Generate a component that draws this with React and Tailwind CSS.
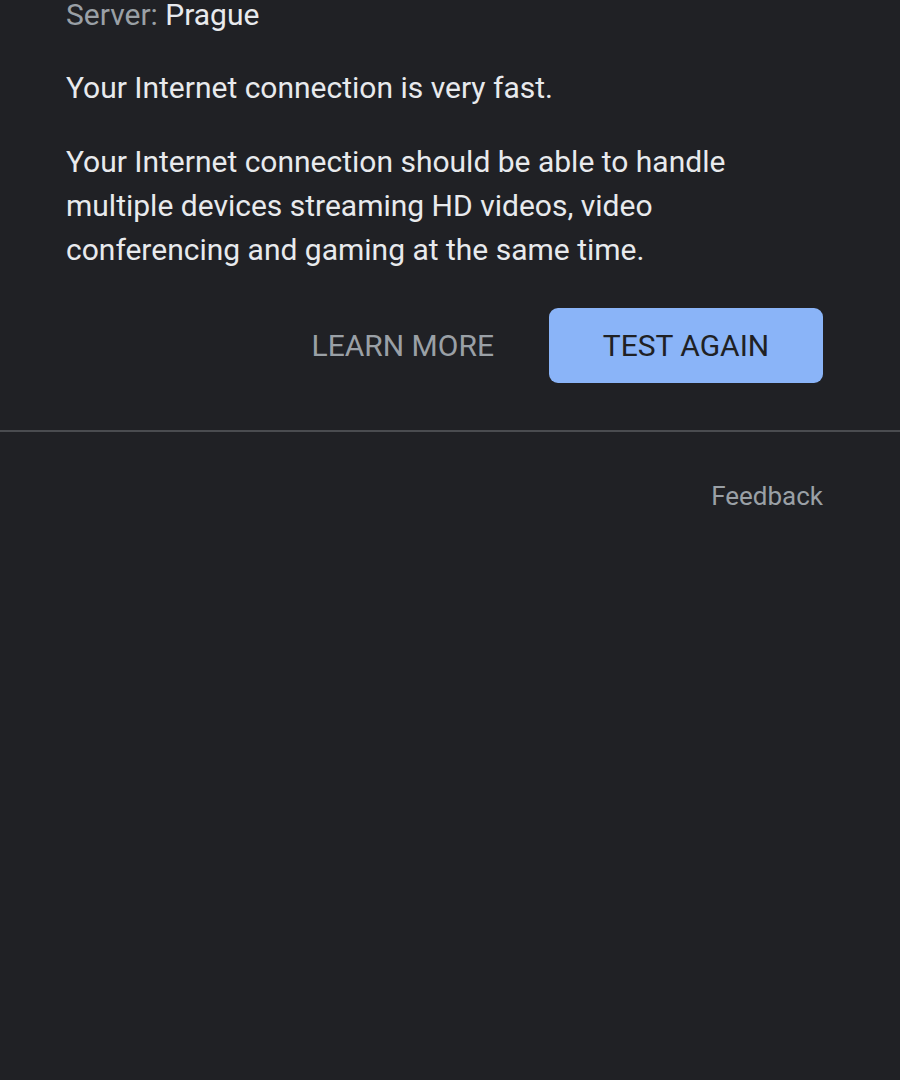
import React from 'react';

const App = () => {
  return (
    <div className="min-h-[1080px] w-full bg-[#202125] font-['Roboto',sans-serif] overflow-hidden">
      {/* Result text */}
      <div className="px-[66px]">
        <p className="text-[30px] leading-[30px] text-[#9aa0a6]">
          Server: <span className="text-[#e8eaed]">Prague</span>
        </p>
        <p className="mt-[36px] text-[30px] leading-[44px] text-[#e8eaed]">
          Your Internet connection is very fast.
        </p>
        <p className="mt-[30px] text-[30px] leading-[44px] text-[#e8eaed] max-w-[720px]">
          Your Internet connection should be able to handle multiple devices streaming HD videos, video
          conferencing and gaming at the same time.
        </p>
      </div>

      {/* Actions */}
      <div className="mt-[36px] pr-[77px] flex items-center justify-end gap-[55px]">
        <button className="text-[30px] leading-[44px] text-[#9aa0a6]">LEARN MORE</button>
        <button className="w-[274px] h-[75px] rounded-[9px] bg-[#8ab4f8] text-[30px] text-[#202124]">
          TEST AGAIN
        </button>
      </div>

      <div className="mt-[47px] h-[2px] bg-[#4a4c50]" />

      <div className="mt-[48px] pr-[77px] flex justify-end">
        <a className="text-[26px] leading-[32px] text-[#9aa0a6]">Feedback</a>
      </div>
    </div>
  );
};

export default App;
